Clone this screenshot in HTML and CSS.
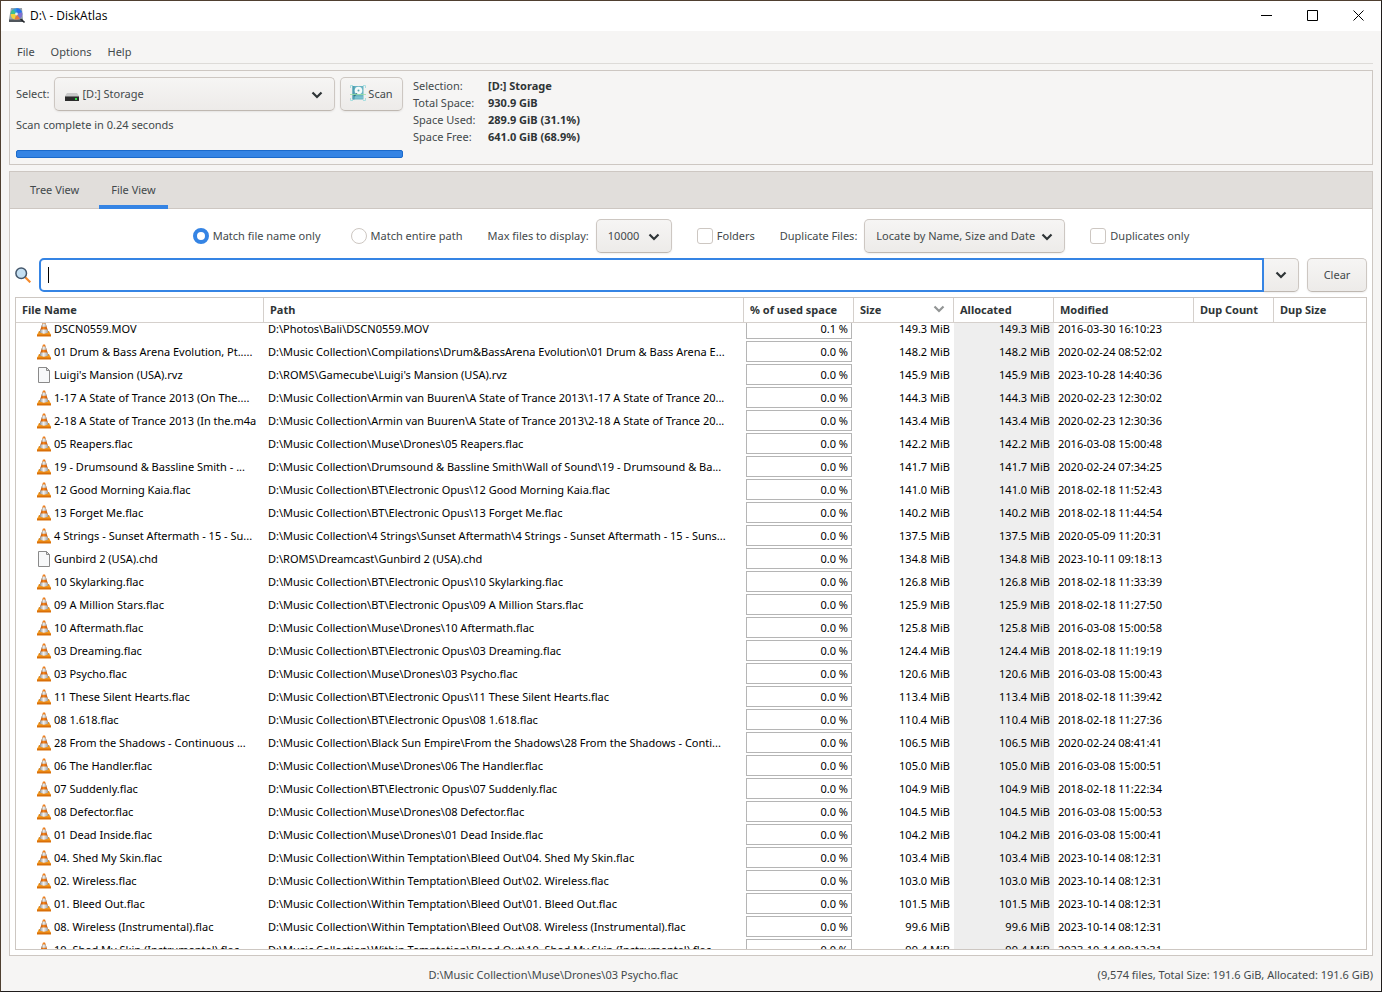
FILE: index.html
```html
<!DOCTYPE html>
<html lang="en">
<head>
  <meta charset="UTF-8">
  <meta name="viewport" content="width=device-width, initial-scale=1.0">
  <title>D:\ - DiskAtlas</title>
  <link rel="stylesheet" href="styles.css">
</head>
<body>
  <!-- shared icons -->
  <svg class="sprite" aria-hidden="true">
    <defs>
      <linearGradient id="coneOrange" x1="0" x2="1">
        <stop offset="0" stop-color="#a84300"></stop>
        <stop offset="0.45" stop-color="#f5851f"></stop>
        <stop offset="1" stop-color="#b84c00"></stop>
      </linearGradient>
      <linearGradient id="coneWhite" x1="0" x2="1">
        <stop offset="0" stop-color="#8a8a8a"></stop>
        <stop offset="0.45" stop-color="#f2f2f2"></stop>
        <stop offset="1" stop-color="#999"></stop>
      </linearGradient>
    </defs>
    <symbol id="cone" viewBox="0 0 14 16">
      <path d="M2 10h10l2 4H0z" fill="#f59a1c"></path>
      <path d="M0 13.500h14V15.500H0z" fill="#d96f08"></path>
      <path d="M6 .5h2L11.500 11.500Q7 13.800 2.500 11.500z" fill="url(#coneOrange)"></path>
      <path d="M5.400 2.500h3.200l1 3.200H4.400z" fill="url(#coneWhite)"></path>
      <path d="M3.500 8.500h7l1 3Q7 13.800 2.500 11.500z" fill="url(#coneWhite)"></path>
    </symbol>
    <symbol id="page" viewBox="0 0 14 16">
      <path d="M1.500.5h8l3 3v12h-11z" fill="#f7f8f9" stroke="#8a8a8a"></path>
      <path d="M9.500.5v3h3z" fill="#e2e2e2" stroke="#8a8a8a"></path>
    </symbol>
    <symbol id="chevron" viewBox="0 0 12 8">
      <path d="M1.500 1.500L6 6l4.500-4.500" fill="none" stroke="currentColor" stroke-width="2.200"></path>
    </symbol>
  </svg>

  <div class="window">
    <!-- title bar -->
    <header class="titlebar">
      <svg class="app-icon" viewBox="0 0 16 16" aria-hidden="true">
        <path d="M2 0h11l1 11v3H0v-3z" fill="#9aa3ab"></path>
        <path d="M0 11.500h14v2.500H0z" fill="#50565c"></path>
        <circle cx="7.500" cy="6" r="5.800" fill="#2f9be0"></circle>
        <path d="M7.500 6V.2a5.800 5.800 0 0 1 5.500 4z" fill="#2a70e8"></path>
        <path d="M7.500 6L13 4.200a5.800 5.800 0 0 1-2 6.300z" fill="#7f6fd0"></path>
        <path d="M7.500 6l3.500 4.500a5.800 5.800 0 0 1-5.500 1z" fill="#e8793e"></path>
        <path d="M7.500 6l-2 5.500A5.800 5.800 0 0 1 1.700 6z" fill="#f2d23b"></path>
        <path d="M7.500 6H1.700a5.800 5.800 0 0 1 2.200-4.500z" fill="#3fbf8a"></path>
        <circle cx="7.500" cy="6" r="1.400" fill="#e6eef5"></circle>
        <path d="M11.500 11l4 3.500" stroke="#24282c" stroke-width="1.600"></path>
      </svg>
      <h1>D:\ - DiskAtlas</h1>
      <div class="window-buttons">
        <button type="button" aria-label="Minimize"><svg viewBox="0 0 11 11"><path d="M0 5.500h11"></path></svg></button>
        <button type="button" aria-label="Maximize"><svg viewBox="0 0 11 11"><path d="M.5.5h10v10H.5z"></path></svg></button>
        <button type="button" aria-label="Close"><svg viewBox="0 0 11 11"><path d="M.5.5l10 10M10.500.5l-10 10"></path></svg></button>
      </div>
    </header>

    <nav class="menubar">
      <a href="#">File</a>
      <a href="#">Options</a>
      <a href="#">Help</a>
    </nav>

    <!-- drive selection -->
    <section class="drive-panel">
      <div class="drive-controls">
        <div class="drive-row">
          <label for="drive">Select:</label>
          <div class="select-box drive-select">
            <svg class="drive-icon" viewBox="0 0 14 8" aria-hidden="true">
              <path d="M2 0h10l2 3H0z" fill="#c9c9c9"></path>
              <path d="M0 3h14v5H0z" fill="#2c2c2c"></path>
              <path d="M0 3h14v1H0z" fill="#777"></path>
              <path d="M10 5h2v2h-2z" fill="#31e04a"></path>
            </svg>
            <select id="drive"><option>[D:] Storage</option></select>
            <svg class="chevron" aria-hidden="true"><use href="#chevron"></use></svg>
          </div>
          <button class="btn scan-btn" type="button">
            <svg viewBox="0 0 16 16" aria-hidden="true">
              <path d="M2.500 1h11v13.500h-11z" fill="#69b4c3"></path>
              <path d="M2.500 1h2v13.500h-2z" fill="#4f9fb0"></path>
              <path d="M5 11.500h8v2H5z" fill="#7cc3cf"></path>
              <circle cx="8.500" cy="5.500" r="3.800" fill="#f4fafa"></circle>
              <circle cx="8.500" cy="5.500" r="1" fill="#5fa6b0"></circle>
              <path d="M4 11l3-2.500" stroke="#2f6f7c" stroke-width="1.500"></path>
              <path d="M.5 3V.5H3M13 .5h2.500V3M15.500 13v2.500H13M3 15.500H.5V13" fill="none" stroke="#a9dfe0"></path>
              <path d="M0 9.500h16" stroke="#9be0a4" stroke-opacity="0.800"></path>
            </svg>
            Scan
          </button>
        </div>
        <p class="scan-status">Scan complete in 0.24 seconds</p>
        <div class="progress" role="progressbar" aria-valuenow="100" aria-label="Scan progress"></div>
      </div>
      <dl class="drive-info">
        <dt>Selection:</dt><dd>[D:] Storage</dd>
        <dt>Total Space:</dt><dd>930.9 GiB</dd>
        <dt>Space Used:</dt><dd>289.9 GiB (31.1%)</dd>
        <dt>Space Free:</dt><dd>641.0 GiB (68.9%)</dd>
      </dl>
    </section>

    <main class="notebook">
      <div class="tabs" role="tablist">
        <button type="button" role="tab" aria-selected="false">Tree View</button>
        <button type="button" role="tab" aria-selected="true">File View</button>
      </div>

      <div class="file-view">
        <div class="filters">
          <div class="radios">
            <label class="check"><input type="radio" name="match" checked> Match file name only</label>
            <label class="check"><input type="radio" name="match"> Match entire path</label>
          </div>
          <div class="field">
            <label for="max-files">Max files to display:</label>
            <div class="select-box max-select">
              <select id="max-files"><option>10000</option></select>
              <svg class="chevron" aria-hidden="true"><use href="#chevron"></use></svg>
            </div>
          </div>
          <label class="check"><input type="checkbox"> Folders</label>
          <div class="field">
            <label for="duplicates">Duplicate Files:</label>
            <div class="select-box dup-select">
              <select id="duplicates"><option>Locate by Name, Size and Date</option></select>
              <svg class="chevron" aria-hidden="true"><use href="#chevron"></use></svg>
            </div>
          </div>
          <label class="check"><input type="checkbox"> Duplicates only</label>
        </div>

        <div class="search">
          <label for="search" aria-label="Search">
            <svg viewBox="0 0 16 16" aria-hidden="true">
              <path d="M10 10l5.300 5.300" stroke="#f58a2c" stroke-width="2.200"></path>
              <circle cx="6.200" cy="6.200" r="5.300" fill="#c4dff2" stroke="#43566b" stroke-width="1.500"></circle>
            </svg>
          </label>
          <div class="entry">
            <input id="search" type="text">
          </div>
          <button class="btn history-btn" type="button" aria-label="Search history">
            <svg class="chevron" aria-hidden="true"><use href="#chevron"></use></svg>
          </button>
          <button class="btn clear-btn" type="button">Clear</button>
        </div>

        <div class="table-wrap" data-scroll>
          <table>
            <colgroup>
              <col class="col-name">
              <col class="col-path">
              <col class="col-percent">
              <col class="col-size">
              <col class="col-size">
              <col class="col-date">
              <col class="col-count">
              <col>
            </colgroup>
            <thead>
              <tr>
                <th>File Name</th>
                <th>Path</th>
                <th>% of used space</th>
                <th><span class="sorted">Size <svg class="chevron" aria-hidden="true"><use href="#chevron"></use></svg></span></th>
                <th>Allocated</th>
                <th>Modified</th>
                <th>Dup Count</th>
                <th>Dup Size</th>
              </tr>
            </thead>
            <tbody data-rows></tbody>
          </table>
        </div>
      </div>
    </main>

    <footer class="statusbar">
      <span class="current-path">D:\Music Collection\Muse\Drones\03 Psycho.flac</span>
      <span class="totals">(9,574 files, Total Size: 191.6 GiB, Allocated: 191.6 GiB)</span>
    </footer>
  </div>
  <script src="script.js"></script>
</body>
</html>
```
FILE: styles.css
```css
:root {
  --bg: #f6f5f4;
  --border: #cdc7c2;
  --accent: #3584e4;
  --text: #2e3436;
  --label: #43494b;
  --strip: #e1dedb;
}

* {
  margin: 0;
  padding: 0;
  box-sizing: border-box;
}

body {
  font-family: "Noto Sans", "Open Sans", sans-serif;
  font-size: 11px;
  line-height: 17px;
  color: var(--label);
}

button,
input,
select {
  font: inherit;
  color: inherit;
}

a {
  color: inherit;
  text-decoration: none;
}

.sprite {
  position: absolute;
  width: 0;
  height: 0;
}

.window {
  height: 100vh;
  display: flex;
  flex-direction: column;
  background: var(--bg);
  border: 1px solid #1f1c1c;
  border-top-color: #4f3f30;
  border-left-color: #4f3f30;
}

/* title bar */
.titlebar {
  height: 30px;
  flex: none;
  display: flex;
  align-items: center;
  gap: 5px;
  padding-left: 8px;
  background: #fff;
  color: #000;
}

.app-icon {
  width: 16px;
  height: 16px;
}

.titlebar h1 {
  font-family: "Open Sans", sans-serif;
  font-size: 12px;
  line-height: 17px;
  font-weight: normal;
  padding-bottom: 2px;
}

.window-buttons {
  margin-left: auto;
  display: flex;
}

.window-buttons button {
  width: 46px;
  height: 30px;
  padding-bottom: 2px;
  border: 0;
  background: none;
  display: flex;
  align-items: center;
  justify-content: center;
}

.window-buttons svg {
  width: 11px;
  height: 11px;
  fill: none;
  stroke: #000;
}

/* menu */
.menubar {
  display: flex;
  margin: 9px 8px 0;
  height: 24px;
  flex: none;
  border-bottom: 1px solid #dddbd8;
}

.menubar a {
  padding: 3px 8px;
}

/* drive panel */
.drive-panel {
  display: flex;
  gap: 10px;
  margin: 6px 8px 0;
  padding: 6px;
  border: 1px solid var(--border);
}

.drive-controls {
  width: 387px;
}

.drive-row {
  display: flex;
  align-items: center;
  gap: 5px;
}

.drive-row label,
.field label {
  padding-bottom: 2px;
}

.select-box {
  position: relative;
}

.drive-select {
  flex: 1;
}

.select-box select,
.btn {
  height: 34px;
  padding-bottom: 2px;
  border: 1px solid var(--border);
  border-bottom-color: #bfb8b1;
  border-radius: 5px;
  background: linear-gradient(#f6f5f4, #edebe9);
  box-shadow: 0 1px 2px rgba(0, 0, 0, 0.07);
}

.select-box select {
  appearance: none;
  width: 100%;
  padding: 0 11px 2px;
}

.drive-select select {
  padding-left: 27px;
}

.select-box .chevron {
  position: absolute;
  right: 12px;
  top: 14px;
  pointer-events: none;
}

.drive-icon {
  position: absolute;
  left: 11px;
  top: 16px;
  width: 14px;
  height: 8px;
}

.chevron {
  width: 12px;
  height: 8px;
  color: var(--text);
}

.scan-btn {
  width: 63px;
  display: flex;
  align-items: center;
  justify-content: center;
  gap: 2px;
}

.scan-btn svg {
  width: 16px;
  height: 16px;
}

.scan-status {
  margin-top: 5px;
}

.progress {
  height: 8px;
  margin-top: 17px;
  background: var(--accent);
  border: 1px solid #1b6acb;
  border-radius: 2px;
}

.drive-info {
  display: grid;
  grid-template-columns: 75px auto;
  align-content: start;
}

.drive-info dd {
  font-weight: bold;
  color: var(--text);
}

/* tabs */
.notebook {
  flex: 1;
  min-height: 0;
  display: flex;
  flex-direction: column;
  margin: 6px 8px 0;
  border: 1px solid var(--border);
  background: #fff;
}

.tabs {
  flex: none;
  height: 37px;
  display: flex;
  gap: 8px;
  padding-left: 8px;
  background: var(--strip);
  border-bottom: 1px solid var(--border);
}

.tabs button {
  height: 37px;
  padding: 2px 12px 0;
  border: 0;
  border-bottom: 4px solid transparent;
  background: none;
}

.tabs button[aria-selected="true"] {
  border-bottom-color: var(--accent);
}

.file-view {
  flex: 1;
  min-height: 0;
  display: flex;
  flex-direction: column;
  gap: 5px;
  padding: 10px 5px 5px;
}

/* filters */
.filters {
  display: flex;
  align-items: center;
  justify-content: center;
  gap: 25px;
}

.radios {
  display: flex;
  gap: 30px;
}

.check {
  display: flex;
  align-items: flex-start;
  gap: 4px;
  line-height: 16px;
}

.field {
  display: flex;
  align-items: center;
  gap: 7px;
}

.check input {
  appearance: none;
  width: 16px;
  height: 16px;
  background: #fff;
  border: 1px solid var(--border);
  border-radius: 3px;
}

.check input[type="radio"] {
  border-radius: 50%;
}

.check input[type="radio"]:checked {
  border: 4px solid var(--accent);
}

.max-select {
  width: 76px;
}

.dup-select {
  width: 201px;
}

/* search */
.search {
  display: flex;
  align-items: center;
}

.search label {
  width: 24px;
  height: 16px;
}

.search label svg {
  width: 16px;
  height: 16px;
}

.entry {
  position: relative;
  flex: 1;
}

.entry input {
  display: block;
  width: 100%;
  height: 34px;
  padding: 0 7px;
  border: 2px solid var(--accent);
  border-radius: 5px 0 0 5px;
  outline: 0;
}

/* text cursor */
.entry::after {
  content: "";
  position: absolute;
  left: 9px;
  top: 9px;
  width: 1px;
  height: 16px;
  background: #000;
}

.history-btn {
  width: 35px;
  border-left: 0;
  border-radius: 0 5px 5px 0;
}

.clear-btn {
  width: 60px;
  margin-left: 8px;
}

/* file table */
.table-wrap {
  flex: 1;
  min-height: 0;
  overflow: auto;
  scrollbar-width: none;
  border: 1px solid var(--border);
}

table {
  width: 100%;
  table-layout: fixed;
  border-spacing: 0;
  color: #000;
}

.col-name { width: 248px; }
.col-path { width: 480px; }
.col-percent { width: 110px; }
.col-size { width: 100px; }
.col-date { width: 140px; }
.col-count { width: 80px; }

th {
  position: sticky;
  top: 0;
  z-index: 1;
  height: 25px;
  padding: 0 6px 2px;
  text-align: left;
  white-space: nowrap;
  color: var(--text);
  background: #fff;
  border-right: 1px solid #d5d0cc;
  border-bottom: 1px solid #d5d0cc;
}

th:last-child {
  border-right: 0;
}

.sorted {
  display: flex;
  align-items: center;
  justify-content: space-between;
}

.sorted .chevron {
  margin-right: 2px;
  color: #929595;
}

td {
  height: 23px;
  padding: 0 4px;
  white-space: nowrap;
  overflow: hidden;
}

.name {
  display: flex;
  align-items: center;
  gap: 3px;
  padding-left: 17px;
}

.name svg {
  width: 14px;
  height: 16px;
  flex: none;
}

td.percent {
  padding: 0 2px;
}

.percent div {
  height: 21px;
  padding: 1px 3px;
  text-align: right;
  border: 1px solid #b5b5b5;
}

.size {
  text-align: right;
}

.allocated {
  background: #eee;
}

/* status bar */
.statusbar {
  flex: none;
  height: 35px;
  display: grid;
  grid-template-columns: 1fr auto;
  align-items: center;
  padding: 2px 8px 0;
}

.current-path {
  text-align: center;
}
```
FILE: script.js
```js
// file name, path, size in MiB, modified, share of used space
const M = "D:\\Music Collection\\";
const files = [
  ["DSCN0559.MOV", "D:\\Photos\\Bali\\DSCN0559.MOV", "149.3", "2016-03-30 16:10:23", "0.1"],
  ["01 Drum & Bass Arena Evolution, Pt.....", M + "Compilations\\Drum&BassArena Evolution\\01 Drum & Bass Arena E...", "148.2", "2020-02-24 08:52:02"],
  ["Luigi's Mansion (USA).rvz", "D:\\ROMS\\Gamecube\\Luigi's Mansion (USA).rvz", "145.9", "2023-10-28 14:40:36"],
  ["1-17 A State of Trance 2013 (On The....", M + "Armin van Buuren\\A State of Trance 2013\\1-17 A State of Trance 20...", "144.3", "2020-02-23 12:30:02"],
  ["2-18 A State of Trance 2013 (In the.m4a", M + "Armin van Buuren\\A State of Trance 2013\\2-18 A State of Trance 20...", "143.4", "2020-02-23 12:30:36"],
  ["05 Reapers.flac", M + "Muse\\Drones\\05 Reapers.flac", "142.2", "2016-03-08 15:00:48"],
  ["19 - Drumsound & Bassline Smith - ...", M + "Drumsound & Bassline Smith\\Wall of Sound\\19 - Drumsound & Ba...", "141.7", "2020-02-24 07:34:25"],
  ["12 Good Morning Kaia.flac", M + "BT\\Electronic Opus\\12 Good Morning Kaia.flac", "141.0", "2018-02-18 11:52:43"],
  ["13 Forget Me.flac", M + "BT\\Electronic Opus\\13 Forget Me.flac", "140.2", "2018-02-18 11:44:54"],
  ["4 Strings - Sunset Aftermath - 15 - Su...", M + "4 Strings\\Sunset Aftermath\\4 Strings - Sunset Aftermath - 15 - Suns...", "137.5", "2020-05-09 11:20:31"],
  ["Gunbird 2 (USA).chd", "D:\\ROMS\\Dreamcast\\Gunbird 2 (USA).chd", "134.8", "2023-10-11 09:18:13"],
  ["10 Skylarking.flac", M + "BT\\Electronic Opus\\10 Skylarking.flac", "126.8", "2018-02-18 11:33:39"],
  ["09 A Million Stars.flac", M + "BT\\Electronic Opus\\09 A Million Stars.flac", "125.9", "2018-02-18 11:27:50"],
  ["10 Aftermath.flac", M + "Muse\\Drones\\10 Aftermath.flac", "125.8", "2016-03-08 15:00:58"],
  ["03 Dreaming.flac", M + "BT\\Electronic Opus\\03 Dreaming.flac", "124.4", "2018-02-18 11:19:19"],
  ["03 Psycho.flac", M + "Muse\\Drones\\03 Psycho.flac", "120.6", "2016-03-08 15:00:43"],
  ["11 These Silent Hearts.flac", M + "BT\\Electronic Opus\\11 These Silent Hearts.flac", "113.4", "2018-02-18 11:39:42"],
  ["08 1.618.flac", M + "BT\\Electronic Opus\\08 1.618.flac", "110.4", "2018-02-18 11:27:36"],
  ["28 From the Shadows - Continuous ...", M + "Black Sun Empire\\From the Shadows\\28 From the Shadows - Conti...", "106.5", "2020-02-24 08:41:41"],
  ["06 The Handler.flac", M + "Muse\\Drones\\06 The Handler.flac", "105.0", "2016-03-08 15:00:51"],
  ["07 Suddenly.flac", M + "BT\\Electronic Opus\\07 Suddenly.flac", "104.9", "2018-02-18 11:22:34"],
  ["08 Defector.flac", M + "Muse\\Drones\\08 Defector.flac", "104.5", "2016-03-08 15:00:53"],
  ["01 Dead Inside.flac", M + "Muse\\Drones\\01 Dead Inside.flac", "104.2", "2016-03-08 15:00:41"],
  ["04. Shed My Skin.flac", M + "Within Temptation\\Bleed Out\\04. Shed My Skin.flac", "103.4", "2023-10-14 08:12:31"],
  ["02. Wireless.flac", M + "Within Temptation\\Bleed Out\\02. Wireless.flac", "103.0", "2023-10-14 08:12:31"],
  ["01. Bleed Out.flac", M + "Within Temptation\\Bleed Out\\01. Bleed Out.flac", "101.5", "2023-10-14 08:12:31"],
  ["08. Wireless (Instrumental).flac", M + "Within Temptation\\Bleed Out\\08. Wireless (Instrumental).flac", "99.6", "2023-10-14 08:12:31"],
  ["10. Shed My Skin (Instrumental).flac", M + "Within Temptation\\Bleed Out\\10. Shed My Skin (Instrumental).flac", "99.4", "2023-10-14 08:12:31"]
];

const escapeText = (text) => text.replace(/&/g, "&amp;");

document.querySelector("[data-rows]").innerHTML = files.map(([name, path, size, modified, percent = "0.0"]) => {
  const icon = /\.(rvz|chd)$/.test(name) ? "page" : "cone";
  return `<tr>
    <td><div class="name"><svg aria-hidden="true"><use href="#${icon}"></use></svg>${escapeText(name)}</div></td>
    <td>${escapeText(path)}</td>
    <td class="percent"><div>${percent} %</div></td>
    <td class="size">${size} MiB</td>
    <td class="size allocated">${size} MiB</td>
    <td>${modified}</td>
    <td></td>
    <td></td>
  </tr>`;
}).join("");

// the list is scrolled a little past its first row
document.querySelector("[data-scroll]").scrollTop = 6;
```
